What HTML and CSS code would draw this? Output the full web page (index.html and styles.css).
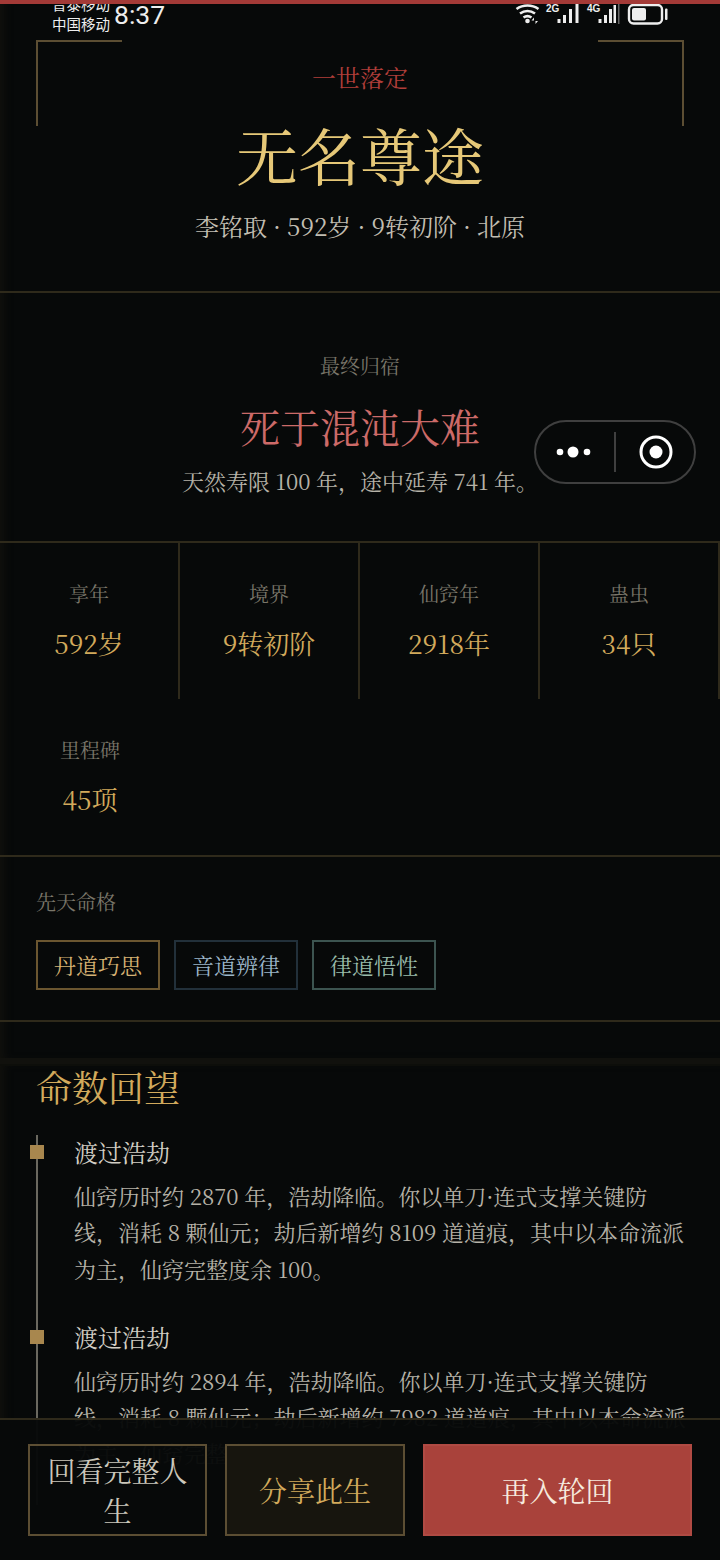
FILE: index.html
```html
<!DOCTYPE html>
<html>
<head>
	<meta charset="utf-8">
	<title>一世落定</title>
	<link rel="stylesheet" href="styles.css">
</head>
<body>
	<div class="phone">
		<div class="page">
			<div class="summary">
				<div class="hero">
					<span class="corner corner-left"></span>
					<span class="corner corner-right"></span>
					<div class="hero-kicker">一世落定</div>
					<div class="hero-title">无名尊途</div>
					<div class="hero-sub">李铭取 · 592岁 · 9转初阶 · 北原</div>
				</div>
				<div class="fate">
					<div class="fate-label">最终归宿</div>
					<div class="fate-title">死于混沌大难</div>
					<div class="fate-note">天然寿限 100 年，途中延寿 741 年。</div>
				</div>
				<div class="stats">
					<div class="stat"><div class="stat-label">享年</div><div class="stat-value">592岁</div></div>
					<div class="stat"><div class="stat-label">境界</div><div class="stat-value">9转初阶</div></div>
					<div class="stat"><div class="stat-label">仙窍年</div><div class="stat-value">2918年</div></div>
					<div class="stat"><div class="stat-label">蛊虫</div><div class="stat-value">34只</div></div>
					<div class="stat stat-last"><div class="stat-label">里程碑</div><div class="stat-value">45项</div></div>
				</div>
				<div class="talents">
					<div class="talents-label">先天命格</div>
					<div class="tags">
						<span class="tag tag-gold">丹道巧思</span>
						<span class="tag tag-blue">音道辨律</span>
						<span class="tag tag-green">律道悟性</span>
					</div>
				</div>
			</div>
			<div class="review">
				<div class="review-title">命数回望</div>
				<div class="timeline">
					<div class="event">
						<div class="event-title">渡过浩劫</div>
						<div class="event-text">仙窍历时约 2870 年，浩劫降临。你以单刀·连式支撑关键防线，消耗 8 颗仙元；劫后新增约 8109 道道痕，其中以本命流派为主，仙窍完整度余 100。</div>
					</div>
					<div class="event">
						<div class="event-title">渡过浩劫</div>
						<div class="event-text">仙窍历时约 2894 年，浩劫降临。你以单刀·连式支撑关键防线，消耗 8 颗仙元；劫后新增约 7982 道道痕，其中以本命流派为主，仙窍完整度余 100。</div>
					</div>
				</div>
			</div>
		</div>

		<div class="statusbar">
			<div class="carrier"><span>普泰移动</span><span>中国移动</span></div>
			<div class="clock">8:37</div>
			<svg class="status-icons" width="156" height="30" viewBox="0 0 156 30">
				<g fill="none" stroke="#eee" stroke-width="2.6">
					<path d="M1.500 9a19 19 0 0 1 22 0"/>
					<path d="M5 13.500a13 13 0 0 1 15 0"/>
					<path d="M8.500 17.500a7 7 0 0 1 8 0"/>
				</g>
				<circle cx="12.500" cy="21" r="2.300" fill="#eee"/>
				<path d="M19 17.500l-2.500 3h2.500zM20.500 24l2.500-3h-2.500z" fill="#eee"/>
				<text class="net" x="31" y="12">2G</text>
				<path d="M42.500 19h3v4h-3zM48 15h3v8h-3zM54 9h3v14h-3zM60.500 3h3v20h-3z" fill="#eee"/>
				<text class="net" x="72" y="12">4G</text>
				<path d="M83.500 19h3v4h-3zM89 15h3v8h-3zM94 9h3v14h-3zM98.500 5h2.500v18h-2.500z" fill="#eee"/>
				<rect x="103" y="3" width="1.500" height="21" fill="#666"/>
				<rect x="114" y="5" width="33" height="18.500" rx="4.500" fill="none" stroke="#eee" stroke-width="2.400"/>
				<rect x="117" y="8" width="14" height="12.500" rx="2" fill="#eee"/>
				<rect x="150" y="8.500" width="2.500" height="11.500" rx="1" fill="#eee"/>
			</svg>
		</div>

		<div class="capsule">
			<svg class="capsule-dots" width="36" height="14" viewBox="0 0 36 14">
				<circle cx="4" cy="7" r="3.300" fill="#fff"/>
				<circle cx="17" cy="7" r="5.500" fill="#fff"/>
				<circle cx="31" cy="7" r="3.300" fill="#fff"/>
			</svg>
			<span class="capsule-line"></span>
			<svg class="capsule-target" width="34" height="34" viewBox="0 0 34 34">
				<circle cx="17" cy="17" r="15" fill="none" stroke="#fff" stroke-width="3"/>
				<circle cx="17" cy="17" r="6.500" fill="#fff"/>
			</svg>
		</div>

		<div class="actions">
			<div class="btn btn-plain">回看完整人生</div>
			<div class="btn btn-share">分享此生</div>
			<div class="btn btn-main">再入轮回</div>
		</div>
	</div>
</body>
</html>
```

FILE: styles.css
```css
* {
	box-sizing: border-box;
}

body {
	margin: 0;
	background: #070909;
}

.phone {
	position: relative;
	width: 720px;
	height: 1560px;
	overflow: hidden;
	font-family: "Noto Serif CJK SC", "Liberation Serif", "Noto Sans CJK SC", serif;
	font-weight: 400;
	background: #070909;
}

.page {
	height: 1560px;
	overflow: hidden;
}

.summary {
	height: 1064px;
	border-bottom: 6px solid #11110d;
	box-shadow: inset 8px 0 8px -4px #11110d;
}

/* hero */
.hero {
	position: relative;
	height: 293px;
	padding-top: 59px;
	text-align: center;
	border-bottom: 2px solid #2f2a1b;
}

.corner {
	position: absolute;
	top: 40px;
	width: 86px;
	height: 86px;
	border-top: 2px solid #5c4e33;
}

.corner-left {
	left: 36px;
	border-left: 2px solid #5c4e33;
}

.corner-right {
	right: 36px;
	border-right: 2px solid #5c4e33;
}

.hero-kicker {
	font-size: 24px;
	line-height: 36px;
	color: #b03e3a;
}

.hero-title {
	margin-top: 15px;
	font-size: 62px;
	line-height: 90px;
	color: #e6c878;
}

.hero-sub {
	margin-top: 8px;
	font-size: 24px;
	line-height: 36px;
	color: #c2beb2;
}

/* final fate */
.fate {
	height: 248px;
	padding-top: 58px;
	text-align: center;
}

.fate-label {
	font-size: 20px;
	line-height: 30px;
	color: #7a7669;
}

.fate-title {
	margin-top: 15px;
	font-size: 40px;
	line-height: 60px;
	color: #cc6a68;
}

.fate-note {
	margin-top: 7px;
	font-size: 22px;
	line-height: 36px;
	color: #b6b2a7;
}

/* stats */
.stats {
	display: grid;
	grid-template-columns: repeat(4, 180px);
	border-top: 2px solid #2f2a1b;
	border-bottom: 2px solid #2f2a1b;
}

.stat {
	height: 156px;
	padding-top: 36px;
	text-align: center;
	border-right: 2px solid #2f2a1b;
}

.stat-last {
	border-right: 0;
}

.stat-label {
	font-size: 20px;
	line-height: 30px;
	color: #7a7669;
}

.stat-value {
	margin-top: 14px;
	font-size: 26px;
	line-height: 40px;
	color: #d2aa5c;
}

/* talents */
.talents {
	height: 165px;
	padding: 30px 36px 0;
	border-bottom: 2px solid #2f2a1b;
}

.talents-label {
	font-size: 20px;
	line-height: 30px;
	color: #7a7669;
}

.tags {
	display: flex;
	gap: 14px;
	margin-top: 23px;
}

.tag {
	width: 124px;
	height: 50px;
	font-size: 22px;
	line-height: 46px;
	text-align: center;
	border: 2px solid;
}

.tag-gold {
	color: #d6b274;
	border-color: #6b5630;
}

.tag-blue {
	color: #9cb6ca;
	border-color: #22303a;
}

.tag-green {
	color: #9abcab;
	border-color: #3c5450;
}

/* timeline */
.review {
	height: 494px;
	padding: 0 32px 0 36px;
	border-top: 2px solid #0d0e0a;
	box-shadow: inset 8px 0 8px -4px #11110d;
}

.review-title {
	font-size: 36px;
	line-height: 42px;
	color: #d2aa5c;
}

.timeline {
	margin-top: 27px;
	padding-left: 36px;
	border-left: 2px solid #6a685f;
}

.event {
	position: relative;
	padding-bottom: 33px;
}

.event::before {
	content: "";
	position: absolute;
	left: -44px;
	top: 10px;
	width: 14px;
	height: 14px;
	background: #a8874e;
}

.event-title {
	font-size: 24px;
	line-height: 34px;
	color: #d2cec4;
}

.event-text {
	margin-top: 9px;
	font-size: 22px;
	line-height: 36.300px;
	color: #b6b2a7;
}

/* wechat capsule */
.capsule {
	position: absolute;
	left: 534px;
	top: 420px;
	display: flex;
	align-items: center;
	width: 162px;
	height: 64px;
	background: #070909;
	border: 2px solid #3f3f3f;
	border-radius: 32px;
}

.capsule-dots {
	margin-left: 20px;
}

.capsule-line {
	width: 2px;
	height: 40px;
	margin-left: 22px;
	background: #3f3f3f;
}

.capsule-target {
	margin-left: 23px;
}

/* status bar */
.statusbar {
	position: absolute;
	left: 0;
	top: 0;
	width: 720px;
	height: 36px;
	border-top: 4px solid #a33a37;
	overflow: hidden;
	color: #eee;
}

.carrier {
	position: absolute;
	left: 52px;
	top: -10px;
	display: flex;
	flex-direction: column;
	font-family: "Noto Sans CJK SC", sans-serif;
	font-size: 14.500px;
	font-weight: 400;
	line-height: 20px;
}

.clock {
	position: absolute;
	left: 114px;
	top: -4px;
	font-family: Roboto, sans-serif;
	font-size: 26.500px;
	font-weight: 400;
	line-height: 30px;
}

.status-icons {
	position: absolute;
	left: 515px;
	top: -4px;
}

.net {
	font-family: "Liberation Sans", sans-serif;
	font-size: 10px;
	font-weight: 700;
	fill: #eee;
}

/* bottom buttons */
.actions {
	position: absolute;
	left: 0;
	bottom: 0;
	display: flex;
	gap: 18px;
	width: 720px;
	height: 142px;
	padding: 24px 28px;
	background: rgba(7, 9, 9, 0.97);
	border-top: 2px solid #2f2a1b;
}

.btn {
	display: flex;
	align-items: center;
	justify-content: center;
	flex: 0 0 179px;
	height: 92px;
	padding: 0 16px;
	font-size: 28px;
	line-height: 40px;
	text-align: center;
	border: 2px solid #5c4e33;
}

.btn-plain {
	color: #cbc7bb;
}

.btn-share {
	flex-basis: 180px;
	color: #d2aa5c;
	background: #17150e;
}

.btn-main {
	flex: 1 1 0;
	color: #f6ebdf;
	background: #a9423b;
	border-color: #b04a43;
}
```
